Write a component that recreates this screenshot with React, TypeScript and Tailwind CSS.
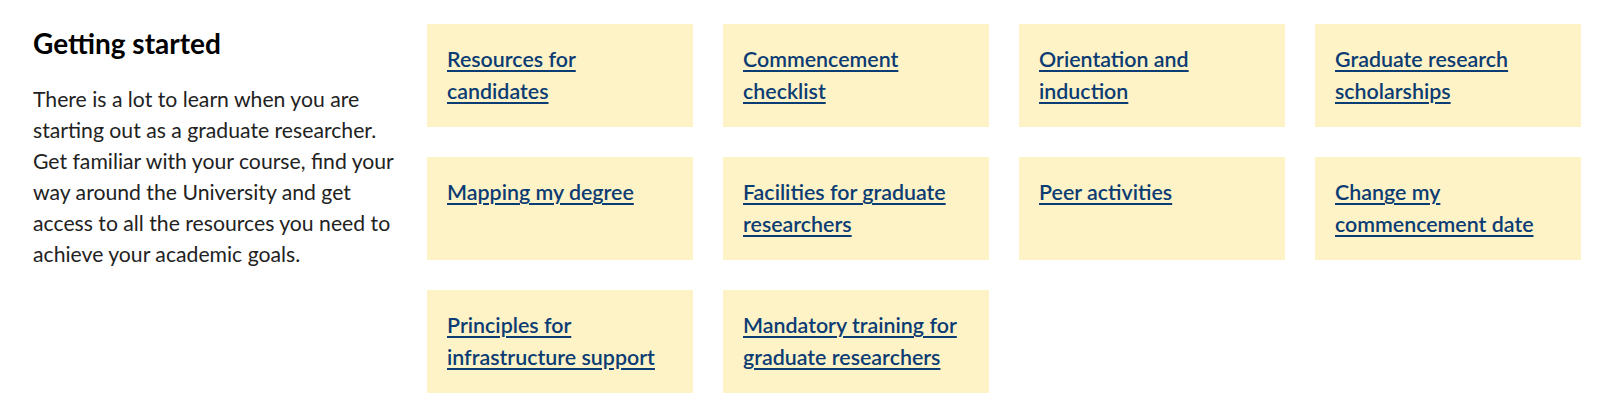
import React from "react";

const links: string[] = [
  "Resources for candidates",
  "Commencement checklist",
  "Orientation and induction",
  "Graduate research scholarships",
  "Mapping my degree",
  "Facilities for graduate researchers",
  "Peer activities",
  "Change my commencement date",
  "Principles for infrastructure support",
  "Mandatory training for graduate researchers",
];

export default function App() {
  return (
    <div
      className="w-[1604px] h-[401px] bg-white flex pl-[33px] pt-[24px] gap-[18px]"
      style={{ fontFamily: "Lato, 'Noto Sans', sans-serif" }}
    >
      <div className="w-[376px] shrink-0">
        <h2 className="text-[28px] font-bold leading-[36px] text-black mt-[1px]">Getting started</h2>
        <p className="mt-[23px] text-[21.2px] leading-[31px] text-[#222222]">
          There is a lot to learn when you are starting out as a graduate researcher. Get familiar with your course, find your way around the University and get access to all the resources you need to achieve your academic goals.
        </p>
      </div>
      <div className="grid grid-cols-[repeat(4,266px)] gap-[30px] content-start">
        {links.map((l) => (
          <div key={l} className="bg-[#fef3c7] h-[103px] px-[20px] pt-[20px]">
            <a
              href="#"
              className="text-[21.4px] font-semibold leading-[31.5px] text-[#0b3c73] underline decoration-[2px] underline-offset-[3px]"
            >
              {l}
            </a>
          </div>
        ))}
      </div>
    </div>
  );
}
